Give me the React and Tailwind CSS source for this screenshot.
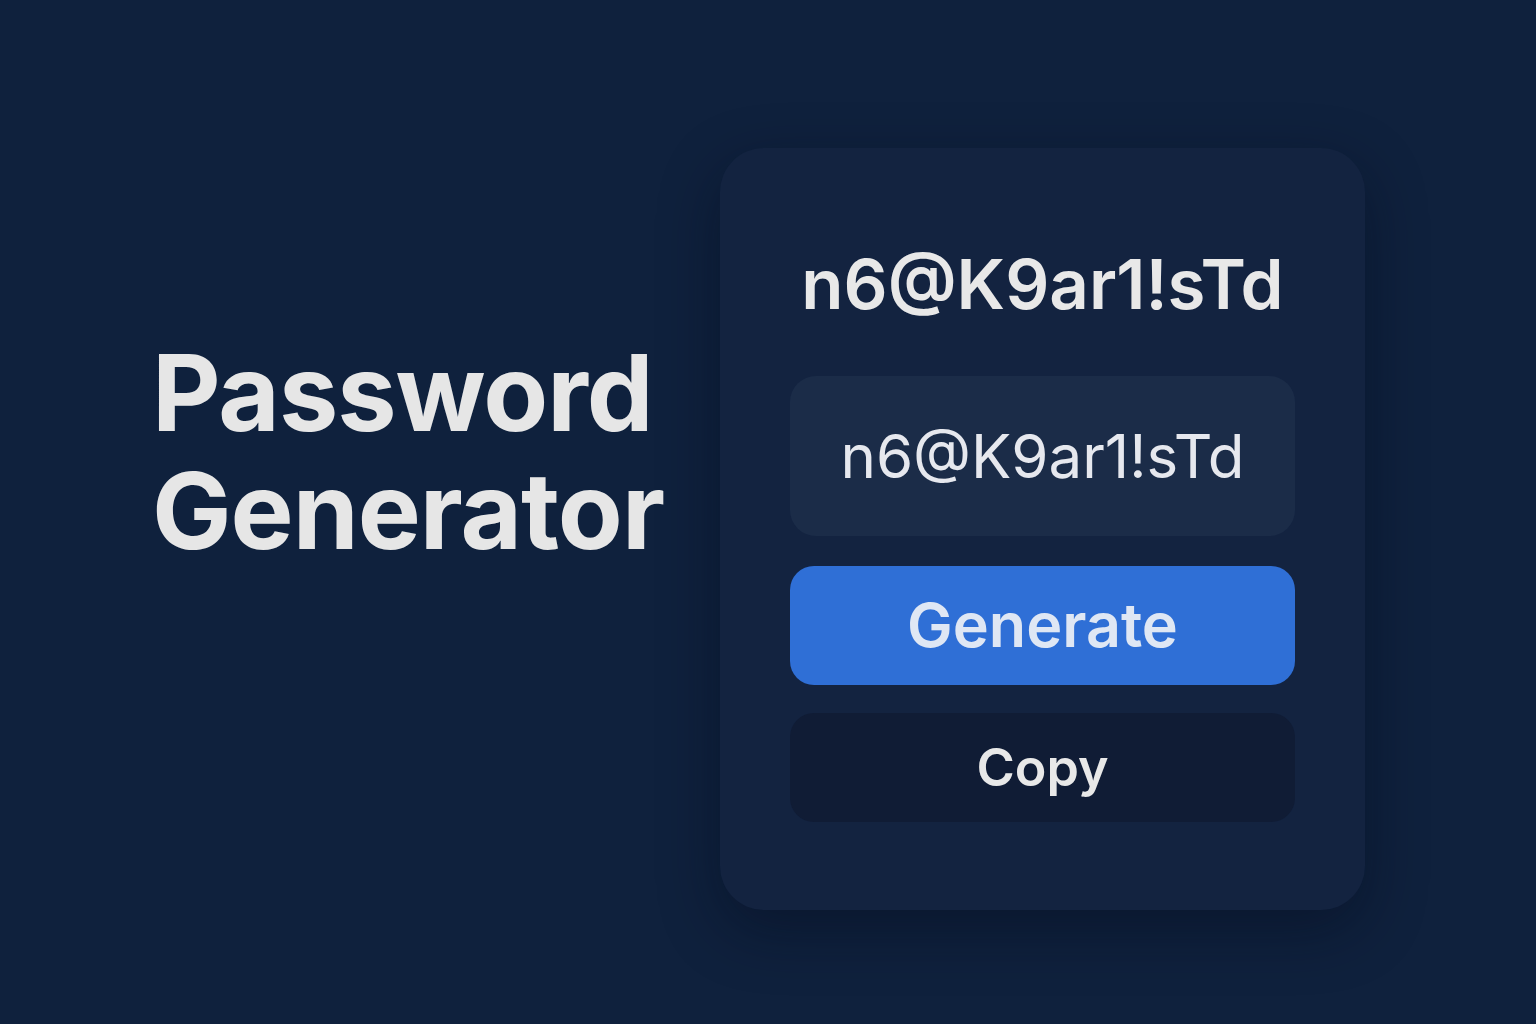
export default function App() {
  const password = "n6@K9ar1!sTd";

  return (
    <div
      className="min-h-screen w-full bg-[#0f213d] flex items-start pt-[148px] pl-[152px]"
      style={{ fontFamily: "Inter, 'Liberation Sans', sans-serif" }}
    >
      <h1 className="mt-[186px] w-[568px] shrink-0 text-[106px] leading-[118px] font-bold text-[#e6e6e6] tracking-[-1px]">
        <span className="block">Password</span>
        <span className="block">Generator</span>
      </h1>

      <div className="w-[645px] h-[762px] shrink-0 rounded-[44px] bg-[#132340] shadow-[0_20px_60px_rgba(5,12,28,0.45)] flex flex-col items-center pt-[102px] px-[70px]">
        <div className="text-[69px] leading-[69px] font-semibold text-[#e8e8e8]">
          {password}
        </div>

        <div className="mt-[57px] w-full h-[160px] rounded-[26px] bg-[#1b2c48] flex items-center justify-center">
          <span className="text-[60px] leading-none font-normal text-[#e6e8ee]">
            {password}
          </span>
        </div>

        <button className="mt-[30px] w-full h-[119px] rounded-[24px] bg-[#2f6fd6] flex items-center justify-center text-[61px] font-semibold text-[#dfe7f4]">
          Generate
        </button>

        <button className="mt-[28px] w-full h-[109px] rounded-[24px] bg-[#101c35] flex items-center justify-center text-[52px] font-semibold text-[#e8e8e8]">
          Copy
        </button>
      </div>
    </div>
  );
}
